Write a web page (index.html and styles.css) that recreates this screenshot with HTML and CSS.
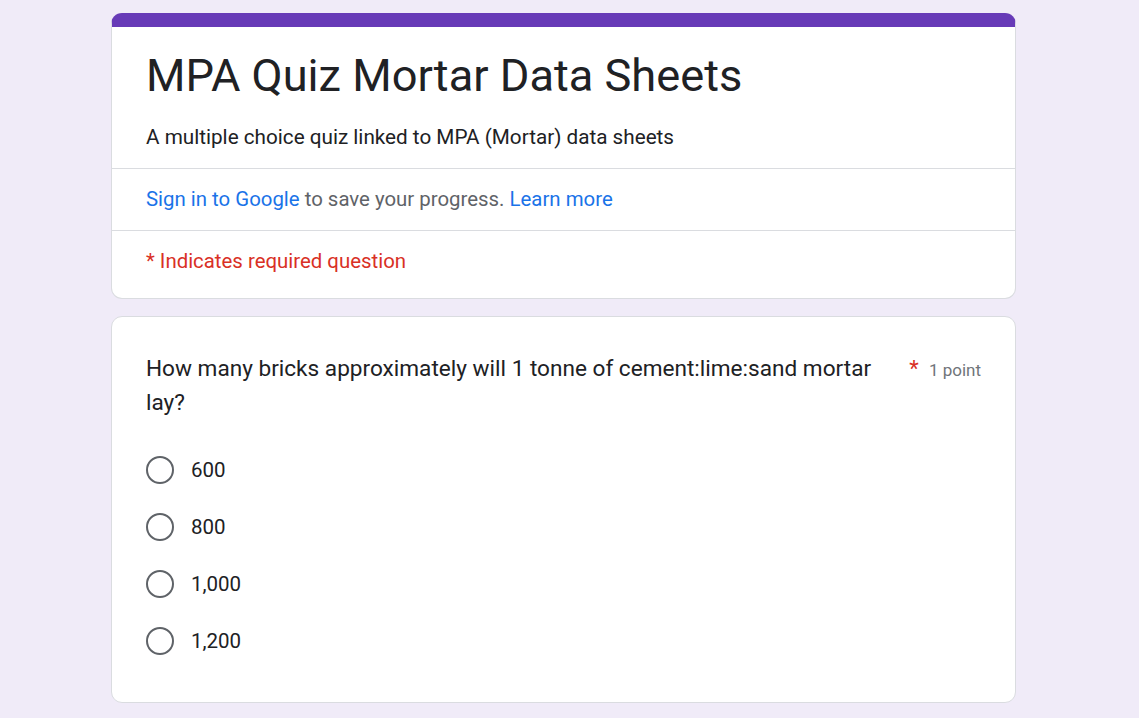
FILE: index.html
```html
<!DOCTYPE html>
<html lang="en">
<head>
    <meta charset="UTF-8">
    <title>MPA Quiz Mortar Data Sheets</title>
    <link rel="stylesheet" href="styles.css">
</head>
<body>

<div class="form-container">
    <div class="card header-card">
        <div class="header-top">
            <h1 class="form-title">MPA Quiz Mortar Data Sheets</h1>
            <div class="form-description">A multiple choice quiz linked to MPA (Mortar) data sheets</div>
        </div>
        <div class="header-row signin-row">
            <a href="#" class="link">Sign in to Google</a> to save your progress. <a href="#" class="link">Learn more</a>
        </div>
        <div class="header-row required-row">* Indicates required question</div>
    </div>

    <div class="card question-card">
        <div class="question-head">
            <div class="question-title">How many bricks approximately will 1 tonne of cement:lime:sand mortar lay?</div>
            <div class="question-points"><span class="required-star">*</span> 1 point</div>
        </div>

        <div class="options">
            <label class="option"><span class="radio"></span><span class="option-label">600</span></label>
            <label class="option"><span class="radio"></span><span class="option-label">800</span></label>
            <label class="option"><span class="radio"></span><span class="option-label">1,000</span></label>
            <label class="option"><span class="radio"></span><span class="option-label">1,200</span></label>
        </div>
    </div>
</div>

</body>
</html>
```

FILE: styles.css
```css
body {
    font-family: Roboto, "Liberation Sans", Arial, sans-serif;
    background-color: #f0ebf8;
    color: #202124;
    margin: 0;
    padding: 13px 0 0 111px;
}

.form-container {
    width: 905px;
    display: flex;
    flex-direction: column;
    gap: 17px;
}

.card {
    background-color: #fff;
    border: 1px solid #dadce0;
    border-radius: 11px;
}

.header-card {
    border-top: 14px solid #673ab7;
}

.header-top {
    padding: 22px 34px 17px;
    border-bottom: 1px solid #dadce0;
}

.form-title {
    margin: 0;
    font-size: 45.2px;
    font-weight: 400;
    line-height: 53px;
    color: #202124;
}

.form-description {
    margin-top: 21px;
    font-size: 20.7px;
    line-height: 28px;
}

.header-row {
    padding: 16px 34px;
    font-size: 20.4px;
    line-height: 28px;
}

.signin-row {
    color: #5f6368;
    padding-bottom: 17px;
    border-bottom: 1px solid #dadce0;
}

.link {
    color: #1a73e8;
    text-decoration: none;
}

.required-row {
    color: #d93025;
    padding-bottom: 23px;
}

.question-card {
    padding: 35px 34px 33px;
}

.question-head {
    display: flex;
    justify-content: space-between;
    gap: 30px;
}

.question-title {
    font-size: 22.6px;
    line-height: 34px;
    max-width: 740px;
}

.question-points {
    flex-shrink: 0;
    font-size: 17px;
    line-height: 34px;
    color: #70757a;
}

.required-star {
    color: #d93025;
    font-size: 22px;
    margin-right: 6px;
}

.options {
    margin-top: 21px;
    display: flex;
    flex-direction: column;
}

.option {
    display: flex;
    align-items: center;
    gap: 17px;
    height: 57px;
    cursor: pointer;
}

.radio {
    width: 28px;
    height: 28px;
    box-sizing: border-box;
    border: 2.8px solid #5f6368;
    border-radius: 50%;
}

.option-label {
    font-size: 20.5px;
}
```
